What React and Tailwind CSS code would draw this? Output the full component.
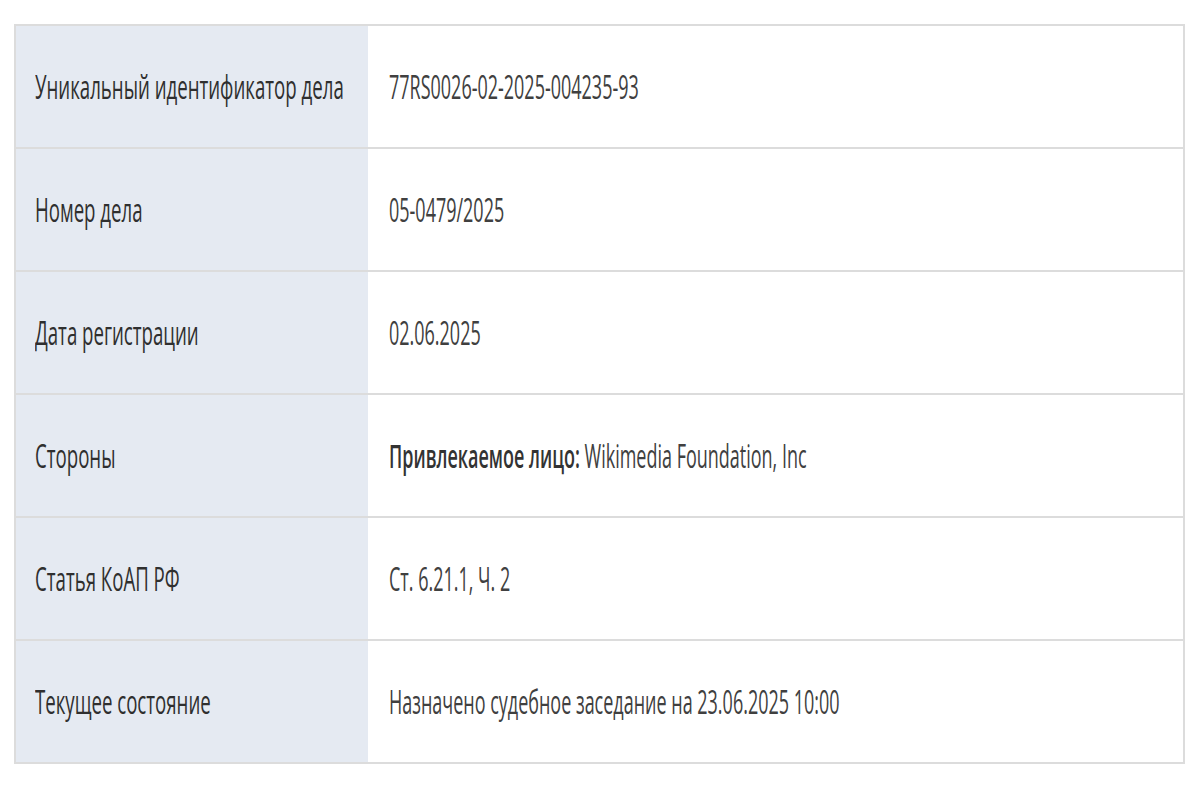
import React from "react";

const rows = [
  { label: "Уникальный идентификатор дела", value: "77RS0026-02-2025-004235-93" },
  { label: "Номер дела", value: "05-0479/2025" },
  { label: "Дата регистрации", value: "02.06.2025" },
  {
    label: "Стороны",
    value: (
      <>
        <span className="font-semibold text-[#333]">Привлекаемое лицо:</span> Wikimedia Foundation, Inc
      </>
    ),
  },
  { label: "Статья КоАП РФ", value: "Ст. 6.21.1, Ч. 2" },
  { label: "Текущее состояние", value: "Назначено судебное заседание на 23.06.2025 10:00" },
];

const App = () => {
  return (
    <div className="min-h-screen bg-white pt-[24px] pl-[14px] font-['Open_Sans',sans-serif]">
      <div className="w-[1171px] border-2 border-[#dcdcdc]">
        {rows.map((row, i) => (
          <div
            key={i}
            className={`flex ${i < rows.length - 1 ? "h-[123px] border-b-2 border-[#dcdcdc]" : "h-[121px]"}`}
          >
            <div className="flex w-[352px] shrink-0 items-center overflow-hidden bg-[#e5eaf2] pl-[19px]">
              {/* the screenshot is squeezed sideways, so text gets a horizontal scale */}
              <span className="inline-block origin-left scale-x-[0.565] whitespace-nowrap text-[33px] leading-none text-[#2f2f2f]">
                {row.label}
              </span>
            </div>
            <div className="flex min-w-0 flex-1 items-center overflow-hidden pl-[21px]">
              <span className="inline-block origin-left scale-x-[0.545] whitespace-nowrap text-[33px] leading-none text-[#404040]">
                {row.value}
              </span>
            </div>
          </div>
        ))}
      </div>
    </div>
  );
};

export default App;
